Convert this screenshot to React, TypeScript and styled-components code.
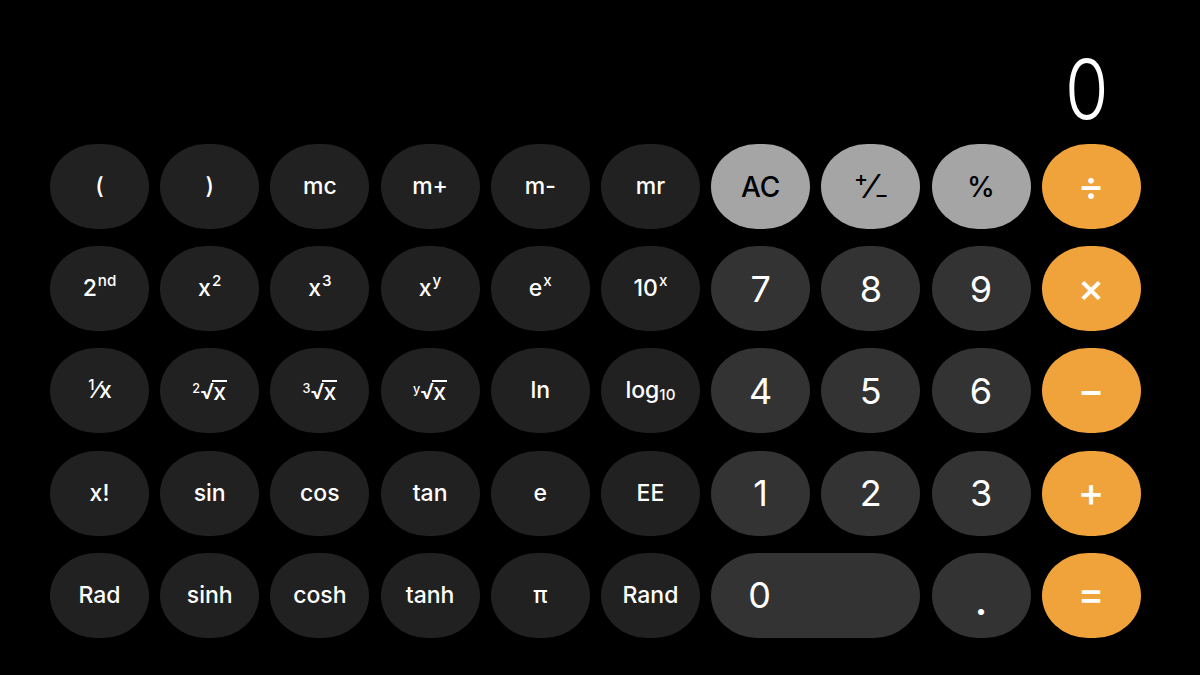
import * as React from 'react';
import styled, { createGlobalStyle } from 'styled-components';

const GlobalStyle = createGlobalStyle`
  html, body {
    margin: 0;
    padding: 0;
    background: #000;
  }
  body {
    font-family: Inter, "Noto Sans", "Liberation Sans", sans-serif;
  }
`;

type Tone = 'sci' | 'num' | 'fn' | 'op';

const bg: Record<Tone, string> = {
  sci: '#212121',
  num: '#333333',
  fn: '#a5a5a5',
  op: '#f1a33b',
};

const Screen = styled.div`
  width: 1200px;
  height: 675px;
  background: #000;
  display: flex;
  flex-direction: column;
  box-sizing: border-box;
  padding: 0 59px 0 50px;
  overflow: hidden;
`;

const Display = styled.div`
  height: 144px;
  display: flex;
  align-items: flex-end;
  justify-content: flex-end;
  padding-right: 32px;
  box-sizing: border-box;

  span {
    color: #fff;
    font-family: Inter, "Noto Sans", sans-serif;
    font-weight: 300;
    font-size: 82px;
    line-height: 1;
    margin-bottom: 13px;
    transform: scaleX(0.86);
    transform-origin: right bottom;
  }
`;

const Pad = styled.div`
  display: grid;
  grid-template-columns: repeat(10, 99px);
  grid-auto-rows: 85px;
  column-gap: 11.2px;
  row-gap: 17.2px;
`;

const Key = styled.button<{ $tone: Tone; $wide?: boolean }>`
  border: none;
  outline: none;
  margin: 0;
  border-radius: 46px / 42.5px;
  background: ${(p) => bg[p.$tone]};
  color: ${(p) => (p.$tone === 'fn' ? '#000' : '#fff')};
  grid-column: ${(p) => (p.$wide ? 'span 2' : 'auto')};
  display: flex;
  align-items: center;
  justify-content: ${(p) => (p.$wide ? 'flex-start' : 'center')};
  padding: 0 0 0 ${(p) => (p.$wide ? '37px' : '0')};
  font-family: Inter, "Noto Sans", "Liberation Sans", sans-serif;
  font-size: ${(p) => (p.$tone === 'sci' ? '23px' : p.$tone === 'fn' ? '28px' : '36px')};
  font-weight: ${(p) => (p.$tone === 'sci' || p.$tone === 'op' ? 500 : 400)};
  line-height: 1;
  cursor: pointer;
  white-space: nowrap;
`;

const Sup = styled.span`
  display: inline-block;
  font-size: 0.66em;
  position: relative;
  top: -0.55em;
  margin-left: 1px;
`;

const Sub = styled.span`
  display: inline-block;
  font-size: 0.66em;
  position: relative;
  top: 0.22em;
`;

const RootIdx = styled.span`
  display: inline-block;
  font-size: 0.55em;
  position: relative;
  top: -0.5em;
  margin-right: 0;
`;

const RootSign = styled.span`
  display: inline-block;
  font-size: 0.95em;
`;

const Radicand = styled.span`
  display: inline-block;
  border-top: 2px solid #fff;
  padding: 1px 1px 0 1px;
  margin-left: -2px;
  line-height: 0.8em;
  position: relative;
  top: 1px;
`;

const Frac = styled.span`
  display: inline-flex;
  align-items: baseline;
`;

const FnText = styled.span<{ $big?: boolean }>`
  font-weight: 500;
  font-size: ${(p) => (p.$big ? '32px' : '28px')};
`;

const OpGlyph = styled.span`
  font-size: 40px;
  font-weight: 500;
  margin-top: -2px;
`;

const Dot = styled.span`
  margin-top: 14px;
  font-weight: 700;
`;

const Root = ({ idx }: { idx: string }) => (
  <Frac>
    <RootIdx>{idx}</RootIdx>
    <RootSign>√</RootSign>
    <Radicand>x</Radicand>
  </Frac>
);

export default function App() {
  return (
    <Screen>
      <GlobalStyle />
      <Display>
        <span>0</span>
      </Display>
      <Pad>
        <Key $tone="sci">(</Key>
        <Key $tone="sci">)</Key>
        <Key $tone="sci">mc</Key>
        <Key $tone="sci">m+</Key>
        <Key $tone="sci">m-</Key>
        <Key $tone="sci">mr</Key>
        <Key $tone="fn"><FnText>AC</FnText></Key>
        <Key $tone="fn">
          <FnText $big>
            <Frac>
              <Sup>+</Sup>⁄<Sub>−</Sub>
            </Frac>
          </FnText>
        </Key>
        <Key $tone="fn"><FnText>%</FnText></Key>
        <Key $tone="op"><OpGlyph>÷</OpGlyph></Key>

        <Key $tone="sci">2<Sup>nd</Sup></Key>
        <Key $tone="sci">x<Sup>2</Sup></Key>
        <Key $tone="sci">x<Sup>3</Sup></Key>
        <Key $tone="sci">x<Sup>y</Sup></Key>
        <Key $tone="sci">e<Sup>x</Sup></Key>
        <Key $tone="sci">10<Sup>x</Sup></Key>
        <Key $tone="num">7</Key>
        <Key $tone="num">8</Key>
        <Key $tone="num">9</Key>
        <Key $tone="op"><OpGlyph>×</OpGlyph></Key>

        <Key $tone="sci">
          <Frac>
            <Sup>1</Sup>⁄<span>x</span>
          </Frac>
        </Key>
        <Key $tone="sci"><Root idx="2" /></Key>
        <Key $tone="sci"><Root idx="3" /></Key>
        <Key $tone="sci"><Root idx="y" /></Key>
        <Key $tone="sci">ln</Key>
        <Key $tone="sci">log<Sub>10</Sub></Key>
        <Key $tone="num">4</Key>
        <Key $tone="num">5</Key>
        <Key $tone="num">6</Key>
        <Key $tone="op"><OpGlyph>−</OpGlyph></Key>

        <Key $tone="sci">x!</Key>
        <Key $tone="sci">sin</Key>
        <Key $tone="sci">cos</Key>
        <Key $tone="sci">tan</Key>
        <Key $tone="sci">e</Key>
        <Key $tone="sci">EE</Key>
        <Key $tone="num">1</Key>
        <Key $tone="num">2</Key>
        <Key $tone="num">3</Key>
        <Key $tone="op"><OpGlyph>+</OpGlyph></Key>

        <Key $tone="sci">Rad</Key>
        <Key $tone="sci">sinh</Key>
        <Key $tone="sci">cosh</Key>
        <Key $tone="sci">tanh</Key>
        <Key $tone="sci">π</Key>
        <Key $tone="sci">Rand</Key>
        <Key $tone="num" $wide>0</Key>
        <Key $tone="num"><Dot>.</Dot></Key>
        <Key $tone="op"><OpGlyph>=</OpGlyph></Key>
      </Pad>
    </Screen>
  );
}
